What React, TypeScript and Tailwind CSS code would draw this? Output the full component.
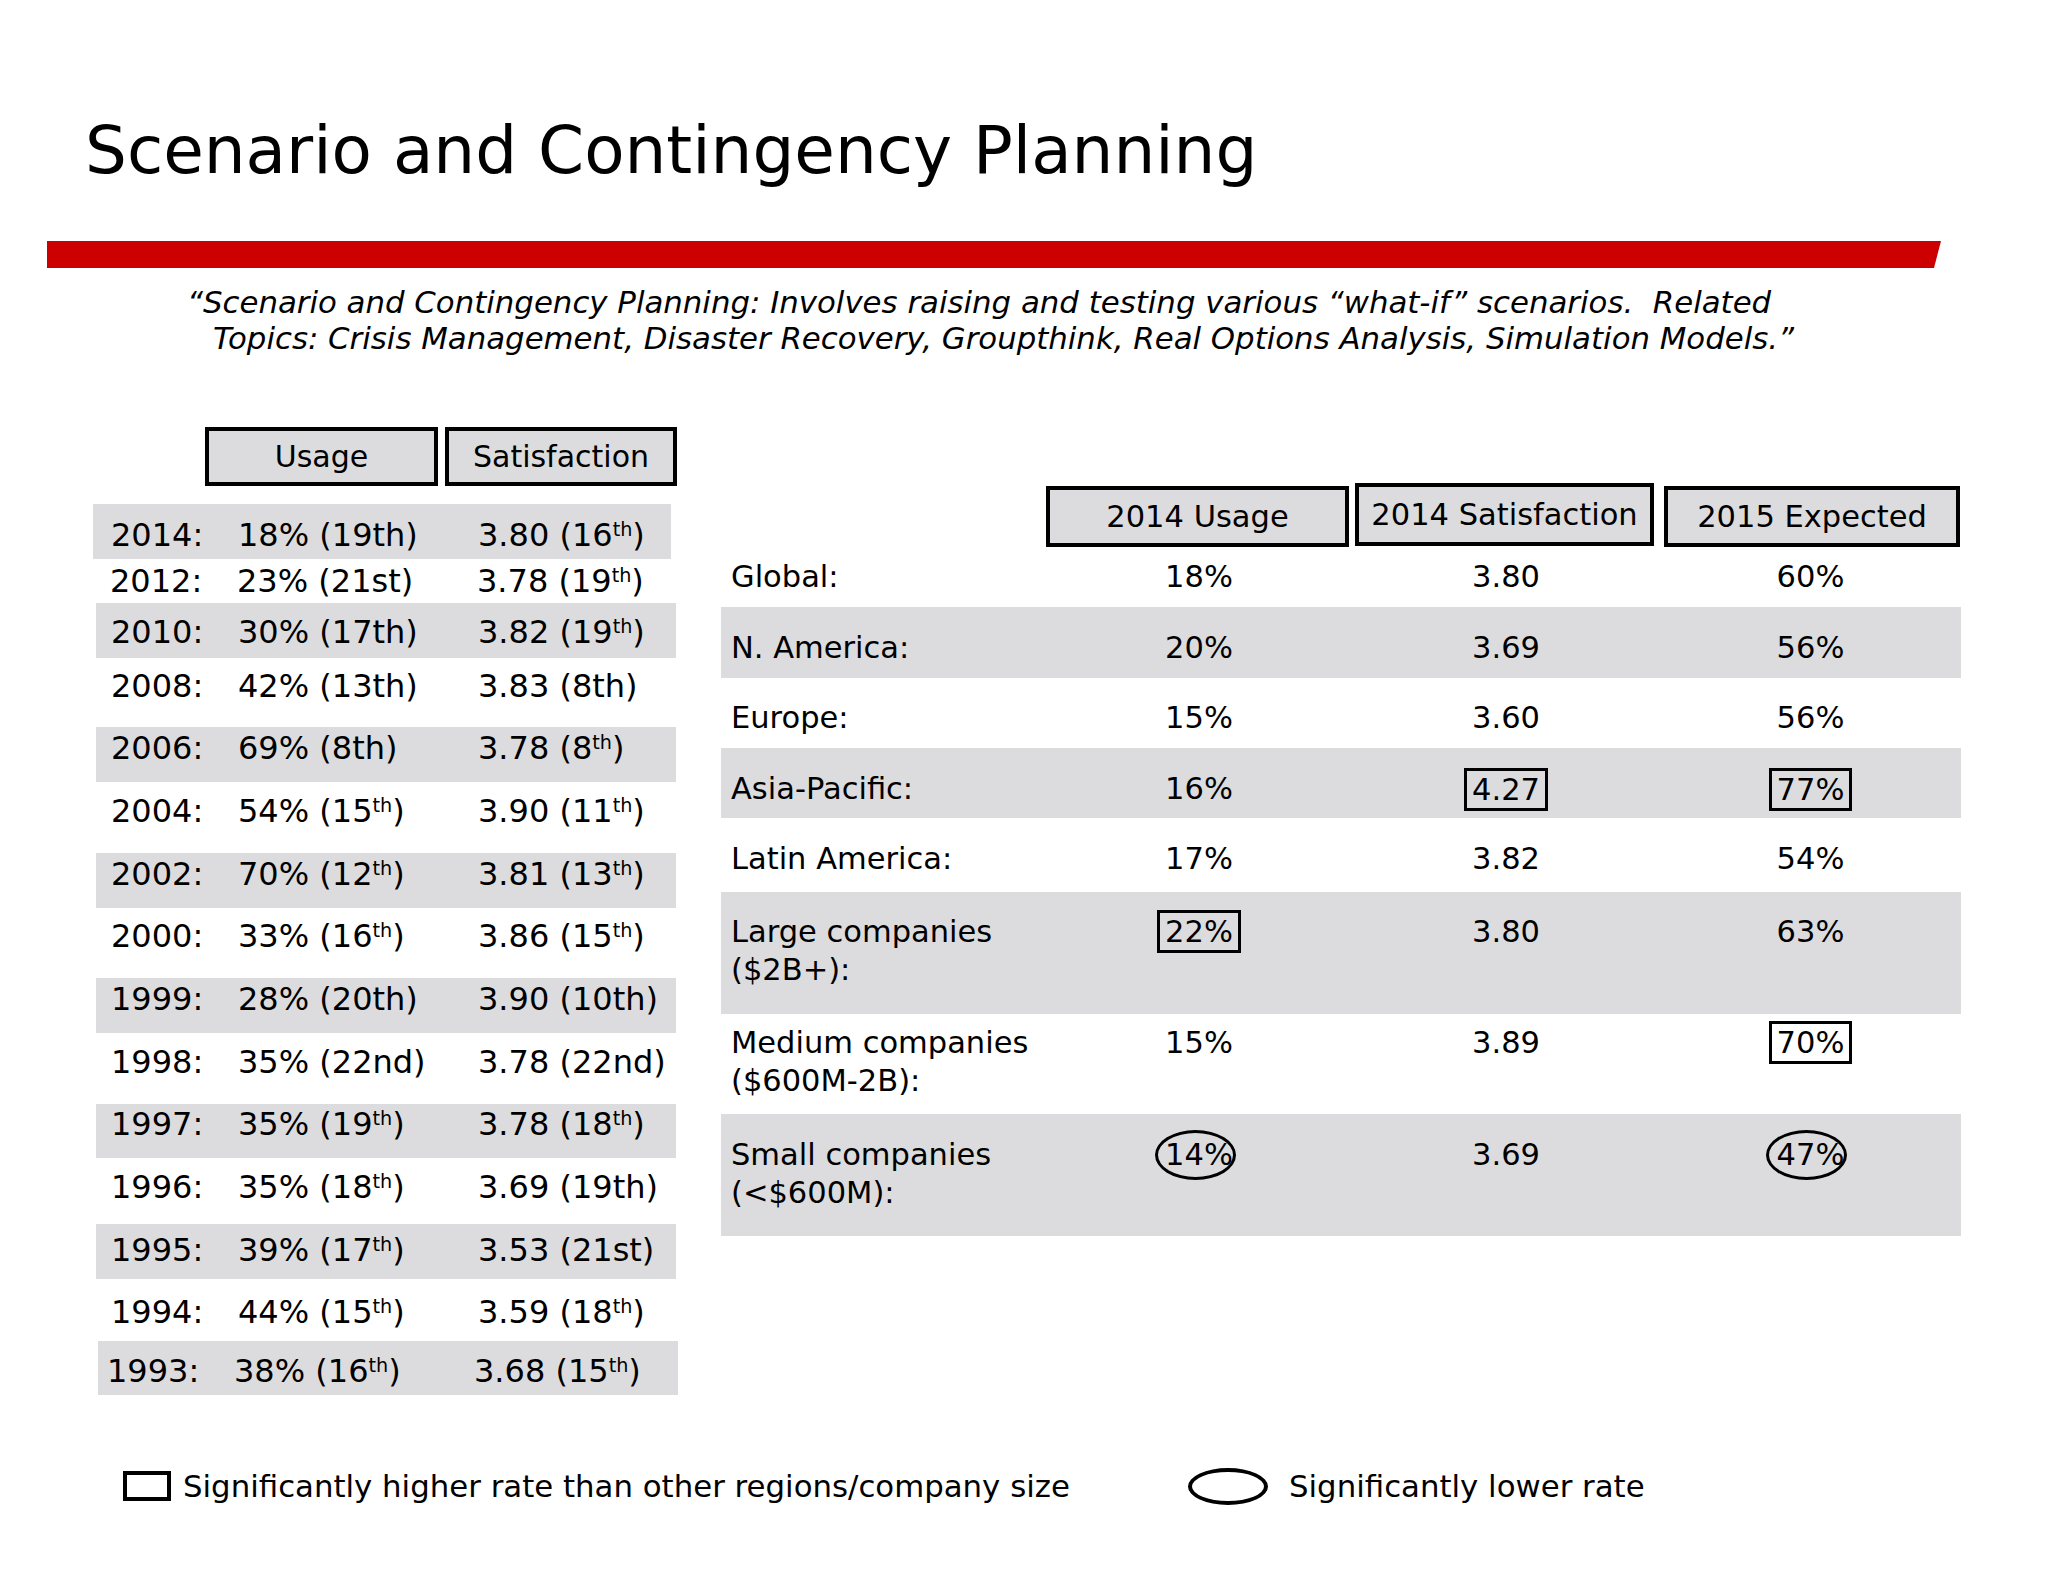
import React from "react";

const Sup = ({ children }: { children: React.ReactNode }) => (
  <sup className="text-[0.6em]">{children}</sup>
);

type LeftRow = {
  y: string;
  u: React.ReactNode;
  s: React.ReactNode;
  cls: string;
};

const leftRows: LeftRow[] = [
  { y: "2014:", u: <>18% (19th)</>, s: <>3.80 (16<Sup>th</Sup>)</>, cls: "h-[55px] pt-[7px] bg-[#dcdcde] w-[578px] pl-[18px]" },
  { y: "2012:", u: <>23% (21st)</>, s: <>3.78 (19<Sup>th</Sup>)</>, cls: "h-[44px] ml-[3px] w-[580px] pl-[14px]" },
  { y: "2010:", u: <>30% (17th)</>, s: <>3.82 (19<Sup>th</Sup>)</>, cls: "h-[55px] pt-[3px] bg-[#dcdcde] ml-[3px] w-[580px] pl-[15px]" },
  { y: "2008:", u: <>42% (13th)</>, s: <>3.83 (8th)</>, cls: "h-[69px] pb-[13px] ml-[3px] w-[580px] pl-[15px]" },
  { y: "2006:", u: <>69% (8th)</>, s: <>3.78 (8<Sup>th</Sup>)</>, cls: "h-[55px] pb-[13px] bg-[#dcdcde] ml-[3px] w-[580px] pl-[15px]" },
  { y: "2004:", u: <>54% (15<Sup>th</Sup>)</>, s: <>3.90 (11<Sup>th</Sup>)</>, cls: "h-[71px] pb-[13px] ml-[3px] w-[580px] pl-[15px]" },
  { y: "2002:", u: <>70% (12<Sup>th</Sup>)</>, s: <>3.81 (13<Sup>th</Sup>)</>, cls: "h-[55px] pb-[13px] bg-[#dcdcde] ml-[3px] w-[580px] pl-[15px]" },
  { y: "2000:", u: <>33% (16<Sup>th</Sup>)</>, s: <>3.86 (15<Sup>th</Sup>)</>, cls: "h-[70px] pb-[14px] ml-[3px] w-[580px] pl-[15px]" },
  { y: "1999:", u: <>28% (20th)</>, s: <>3.90 (10th)</>, cls: "h-[55px] pb-[13px] bg-[#dcdcde] ml-[3px] w-[580px] pl-[15px]" },
  { y: "1998:", u: <>35% (22nd)</>, s: <>3.78 (22nd)</>, cls: "h-[71px] pb-[13px] ml-[3px] w-[580px] pl-[15px]" },
  { y: "1997:", u: <>35% (19<Sup>th</Sup>)</>, s: <>3.78 (18<Sup>th</Sup>)</>, cls: "h-[54px] pb-[14px] bg-[#dcdcde] ml-[3px] w-[580px] pl-[15px]" },
  { y: "1996:", u: <>35% (18<Sup>th</Sup>)</>, s: <>3.69 (19th)</>, cls: "h-[66px] pb-[8px] ml-[3px] w-[580px] pl-[15px]" },
  { y: "1995:", u: <>39% (17<Sup>th</Sup>)</>, s: <>3.53 (21st)</>, cls: "h-[55px] pb-[3px] bg-[#dcdcde] ml-[3px] w-[580px] pl-[15px]" },
  { y: "1994:", u: <>44% (15<Sup>th</Sup>)</>, s: <>3.59 (18<Sup>th</Sup>)</>, cls: "h-[62px] pt-[4px] ml-[3px] w-[580px] pl-[15px]" },
  { y: "1993:", u: <>38% (16<Sup>th</Sup>)</>, s: <>3.68 (15<Sup>th</Sup>)</>, cls: "h-[54px] pt-[6px] bg-[#dcdcde] ml-[5px] w-[580px] pl-[9px]" },
];

const Boxed = ({ children }: { children: React.ReactNode }) => (
  <span className="inline-block border-[3px] border-black px-[5px] leading-[37px] -my-[3px]">
    {children}
  </span>
);

const Circled = ({ children }: { children: React.ReactNode }) => (
  <span className="relative inline-block">
    {children}
    <span className="absolute left-1/2 top-1/2 w-[81px] h-[50px] -translate-x-[44px] -translate-y-[25px] rounded-[50%] border-[3px] border-black" />
  </span>
);

type RightRow = {
  label: React.ReactNode;
  u: React.ReactNode;
  s: React.ReactNode;
  e: React.ReactNode;
  cls: string;
};

const rightRows: RightRow[] = [
  { label: "Global:", u: "18%", s: "3.80", e: "60%", cls: "h-[60px] items-center" },
  { label: "N. America:", u: "20%", s: "3.69", e: "56%", cls: "h-[71px] items-center pt-[11px] bg-[#dcdcde]" },
  { label: "Europe:", u: "15%", s: "3.60", e: "56%", cls: "h-[70px] items-center pt-[10px]" },
  { label: "Asia-Pacific:", u: "16%", s: <Boxed>4.27</Boxed>, e: <Boxed>77%</Boxed>, cls: "h-[70px] items-center pt-[12px] bg-[#dcdcde]" },
  { label: "Latin America:", u: "17%", s: "3.82", e: "54%", cls: "h-[74px] items-center pt-[8px]" },
  { label: <>Large companies<br />($2B+):</>, u: <Boxed>22%</Boxed>, s: "3.80", e: "63%", cls: "h-[122px] items-start pt-[21px] bg-[#dcdcde]" },
  { label: <>Medium companies<br />($600M-2B):</>, u: "15%", s: "3.89", e: <Boxed>70%</Boxed>, cls: "h-[100px] items-start pt-[10px]" },
  { label: <>Small companies<br />(&lt;$600M):</>, u: <Circled>14%</Circled>, s: "3.69", e: <Circled>47%</Circled>, cls: "h-[122px] items-start pt-[22px] bg-[#dcdcde]" },
];

export default function App() {
  return (
    <div className="w-[2048px] h-[1582px] bg-white text-black font-['DejaVu_Sans','Verdana',sans-serif] overflow-hidden">
      <h1 className="mt-[118px] pl-[85px] text-[66px] leading-[66px] font-normal">
        Scenario and Contingency Planning
      </h1>
      <div className="mt-[57px] ml-[47px] w-[1894px] h-[27px] bg-[#cc0000] [clip-path:polygon(0_0,100%_0,calc(100%-7px)_100%,0_100%)]" />
      <div className="mt-[16px] italic text-[30.8px] leading-[36px] whitespace-nowrap">
        <div className="pl-[187px]">
          “Scenario and Contingency Planning: Involves raising and testing various “what-if” scenarios.&nbsp; Related
        </div>
        <div className="pl-[213px]">
          Topics: Crisis Management, Disaster Recovery, Groupthink, Real Options Analysis, Simulation Models.”
        </div>
      </div>

      <div className="mt-[71px] flex items-start">
        {/* Left table */}
        <div className="ml-[93px] w-[585px] text-[32px]">
          <div className="flex h-[59px] text-[30px]">
            <div className="ml-[112px] w-[233px] h-[59px] border-4 border-black bg-[#dcdcde] flex items-center justify-center">
              Usage
            </div>
            <div className="ml-[7px] w-[232px] h-[59px] border-4 border-black bg-[#dcdcde] flex items-center justify-center">
              Satisfaction
            </div>
          </div>
          <div className="mt-[18px]">
            {leftRows.map((r) => (
              <div key={r.y} className={`flex items-center leading-none whitespace-nowrap ${r.cls}`}>
                <div className="w-[127px]">{r.y}</div>
                <div className="w-[240px]">{r.u}</div>
                <div>{r.s}</div>
              </div>
            ))}
          </div>
        </div>

        {/* Right table */}
        <div className="ml-[43px] w-[1240px] mt-[59px] text-[30.5px]">
          <div className="flex h-[61px]">
            <div className="w-[325px]" />
            <div className="w-[303px] h-[61px] border-4 border-black bg-[#dcdcde] flex items-center justify-center">
              2014 Usage
            </div>
            <div className="ml-[6px] w-[299px] h-[63px] -mt-[3px] border-4 border-black bg-[#dcdcde] flex items-center justify-center">
              2014 Satisfaction
            </div>
            <div className="ml-[10px] w-[296px] h-[61px] border-4 border-black bg-[#dcdcde] flex items-center justify-center">
              2015 Expected
            </div>
          </div>
          {rightRows.map((r, i) => (
            <div key={i} className={`flex leading-[38px] whitespace-nowrap ${r.cls}`}>
              <div className="w-[325px] pl-[10px]">{r.label}</div>
              <div className="w-[306px] flex justify-center">{r.u}</div>
              <div className="w-[308px] flex justify-center">{r.s}</div>
              <div className="w-[301px] flex justify-center">{r.e}</div>
            </div>
          ))}
        </div>
      </div>

      <div className="mt-[72px] flex items-center h-[38px] text-[30.8px] whitespace-nowrap">
        <div className="ml-[123px] w-[48px] h-[30px] border-4 border-black" />
        <div className="ml-[12px] w-[1005px]">Significantly higher rate than other regions/company size</div>
        <div className="w-[80px] h-[37px] rounded-[50%] border-4 border-black" />
        <div className="ml-[21px]">Significantly lower rate</div>
      </div>
    </div>
  );
}
